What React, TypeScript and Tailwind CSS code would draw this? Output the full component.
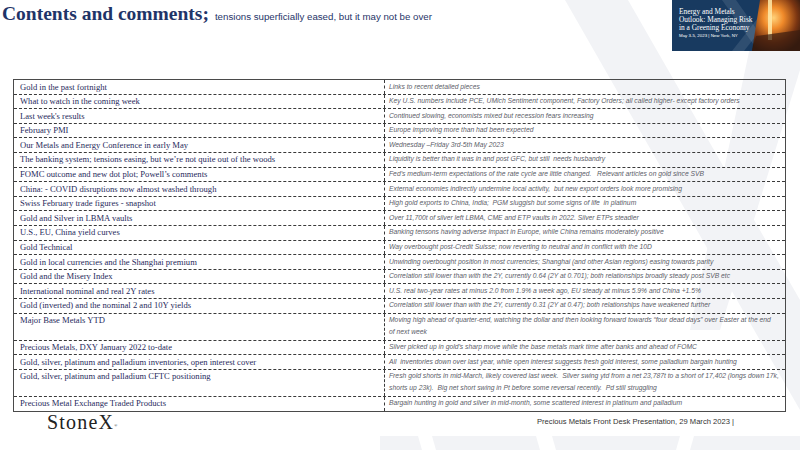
import React from "react";

type Row = { topic: string; note: string[] };

const rows: Row[] = [
  { topic: "Gold in the past fortnight", note: ["Links to recent detailed pieces"] },
  { topic: "What to watch in the coming week", note: ["Key U.S. numbers include PCE, UMich Sentiment component, Factory Orders; all called higher- except factory orders"] },
  { topic: "Last week's results", note: ["Continued slowing, economists mixed but recession fears increasing"] },
  { topic: "February PMI", note: ["Europe improving more than had been expected"] },
  { topic: "Our Metals and Energy Conference in early May", note: ["Wednesday \u2013Friday 3rd-5th May 2023"] },
  { topic: "The banking system; tensions easing, but we\u2019re not quite out of the woods", note: ["Liquidity is better than it was in and post GFC, but still  needs husbandry"] },
  { topic: "FOMC outcome and new dot plot; Powell\u2019s comments", note: ["Fed\u2019s medium-term expectations of the rate cycle are little changed.   Relevant articles on gold since SVB"] },
  { topic: "China: - COVID disruptions now almost washed through", note: ["External economies indirectly undermine local activity,  but new export orders look more promising"] },
  { topic: "Swiss February trade figures - snapshot", note: ["High gold exports to China, India;  PGM sluggish but some signs of life  in platinum"] },
  { topic: "Gold and Silver in LBMA vaults", note: ["Over 11,700t of silver left LBMA, CME and ETP vaults in 2022. Silver ETPs steadier"] },
  { topic: "U.S., EU, China yield curves", note: ["Banking tensons having adverse impact in Europe, while China remains moderately positive"] },
  { topic: "Gold Technical", note: ["Way overbought post-Credit Suisse; now reverting to neutral and in conflict with the 10D"] },
  { topic: "Gold in local currencies and the Shanghai premium", note: ["Unwinding overbought position in most currencies; Shanghai (and other Asian regions) easing towards parity"] },
  { topic: "Gold and the Misery Index", note: ["Correlation still lower than with the 2Y, currently 0.64 (2Y at 0.701); both relationships broadly steady post SVB etc"] },
  { topic: "International nominal and real 2Y rates", note: ["U.S. real two-year rates at minus 2.0 from 1.9% a week ago, EU steady at minus 5.9% and China +1.5%"] },
  { topic: "Gold (inverted) and the nominal 2 and 10Y yields", note: ["Correlation still lower than with the 2Y, currently 0.31 (2Y at 0.47); both relationships have weakened further"] },
  { topic: "Major Base Metals YTD", note: ["Moving high ahead of quarter-end, watching the dollar and then looking forward towards \u201cfour dead days\u201d over Easter at the end", "of next week"] },
  { topic: "Precious Metals, DXY January 2022 to-date", note: ["Silver picked up in gold\u2019s sharp move while the base metals mark time after banks and ahead of FOMC"] },
  { topic: "Gold, silver, platinum and palladium inventories, open interest cover", note: ["All  inventories down over last year, while open interest suggests fresh gold interest, some palladium bargain hunting"] },
  { topic: "Gold, silver, platinum and palladium CFTC positioning", note: ["Fresh gold shorts in mid-March, likely covered last week.  Silver swing ytd from a net 23,787t to a short of 17,402 (longs down 17k,", "shorts up 23k).  Big net short swing in Pt before some reversal recently.  Pd still struggling"] },
  { topic: "Precious Metal Exchange Traded Products", note: ["Bargain hunting in gold and silver in mid-month, some scattered interest in platinum and palladium"] },
];

function Watermark() {
  return (
    <svg className="absolute inset-0" width="800" height="450" viewBox="0 0 800 450">
      <polygon points="565,0 628,0 800,300 800,410" fill="#f2f3f6" />
      <polygon points="760,0 800,0 800,70 720,330 690,330" fill="#f2f3f6" />
      <polygon points="380,436 800,436 800,450 380,450" fill="#f2f3f6" />
      <polygon points="418,436 432,436 436,450 422,450" fill="#ffffff" />
      <polygon points="536,436 552,436 556,450 540,450" fill="#ffffff" />
      <polygon points="680,436 694,436 690,450 676,450" fill="#ffffff" />
    </svg>
  );
}

function Banner() {
  return (
    <div className="relative h-[51px] w-[128px] shrink-0 overflow-hidden bg-[#183a60]">
      <svg className="absolute inset-0" width="128" height="51" viewBox="0 0 128 51">
        <defs>
          <radialGradient id="glow" cx="0.45" cy="0.35" r="0.7">
            <stop offset="0" stopColor="#ffd27a" />
            <stop offset="0.3" stopColor="#f08a2a" />
            <stop offset="0.7" stopColor="#7a3512" />
            <stop offset="1" stopColor="#2a1710" />
          </radialGradient>
        </defs>
        <polygon points="50,0 64,0 100,51 86,51" fill="#ffffff" opacity="0.1" />
        <polygon points="100,0 112,0 72,51 60,51" fill="#ffffff" opacity="0.1" />
        <polygon points="88,0 128,0 128,51 80,51" fill="url(#glow)" />
        <rect x="96" y="0" width="4" height="40" fill="#ffe9a8" opacity="0.85" />
        <polygon points="84,36 128,30 128,51 80,51" fill="#3a1c10" opacity="0.7" />
      </svg>
      <div className="relative pl-[7px] pt-[8px] text-white">
        <div className="text-[7.4px] leading-[7.8px] font-['Liberation_Serif',serif]">
          Energy and Metals
          <br />
          Outlook: Managing Risk
          <br />
          in a Greening Economy
        </div>
        <div className="mt-[2px] text-[4.4px] leading-[5px] font-['Liberation_Sans',sans-serif]">
          May 3-5, 2023 | New York, NY
        </div>
      </div>
    </div>
  );
}

export default function App() {
  return (
    <div className="relative h-[450px] w-[800px] overflow-hidden bg-white">
      <Watermark />
      <div className="relative flex h-full flex-col">
        <header className="flex h-[51px] justify-between">
          <h1 className="flex items-baseline gap-[6px] pl-[2px] pt-[4px] leading-none text-[#1f3468]">
            <span className="text-[19.5px] font-bold font-['Liberation_Serif',serif]">
              Contents and comments;
            </span>
            <span className="text-[9.7px] font-['Liberation_Sans',sans-serif]">
              tensions superficially eased, but it may not be over
            </span>
          </h1>
          <Banner />
        </header>

        <div className="ml-[13px] mt-[28px] w-[773px] border-[1.5px] border-[#4a4a4a]">
          {rows.map((r, i) => (
            <div
              key={i}
              className={`flex ${r.note.length > 1 ? "h-[27px]" : "h-[14.6px]"} ${
                i < rows.length - 1 ? "border-b border-dashed border-[#3a3a3a]" : ""
              }`}
            >
              <div className="w-[371px] shrink-0 whitespace-nowrap border-r border-dashed border-[#3a3a3a] pl-[6px] pt-[1.5px] text-[8.6px] leading-[10px] text-[#1f2a5c] font-['Liberation_Serif',serif]">
                {r.topic}
              </div>
              <div className="whitespace-pre pl-[4px] pt-[0.5px] text-[6.75px] italic text-[#5b5d68] font-['Liberation_Sans',sans-serif]">
                {r.note.map((n, j) => (
                  <div key={j} className="leading-[11.5px]">
                    {n}
                  </div>
                ))}
              </div>
            </div>
          ))}
        </div>

        <footer className="flex items-start">
          <div className="ml-[47px] text-[20px] leading-none tracking-[1.2px] text-[#222] font-['Liberation_Serif',serif]">
            StoneX<sup className="text-[4px] tracking-normal">®</sup>
          </div>
          <div className="ml-auto mr-[66px] mt-[4px] text-[7.6px] text-[#333] font-['Liberation_Sans',sans-serif]">
            Precious Metals Front Desk Presentation, 29 March 2023 |
          </div>
        </footer>
      </div>
    </div>
  );
}
